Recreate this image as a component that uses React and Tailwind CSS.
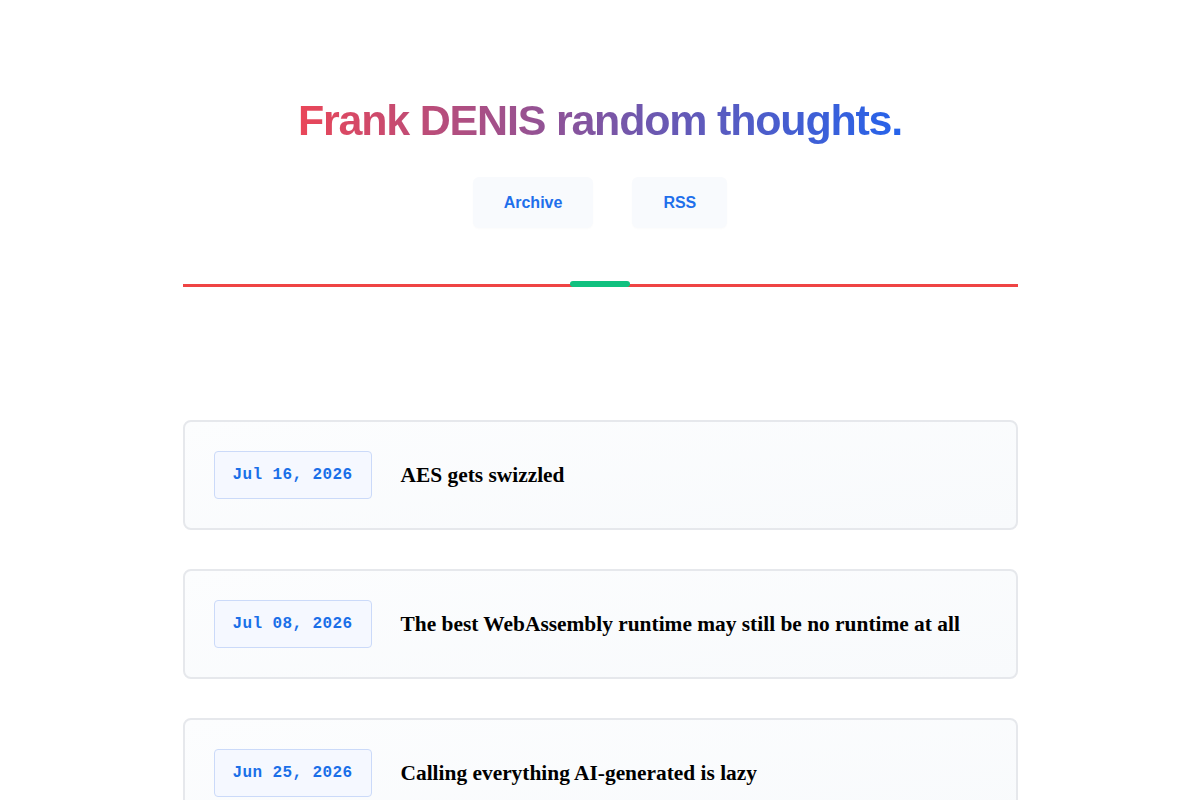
import React from "react";

const posts = [
  { date: "Jul 16, 2026", title: "AES gets swizzled" },
  { date: "Jul 08, 2026", title: "The best WebAssembly runtime may still be no runtime at all" },
  { date: "Jun 25, 2026", title: "Calling everything AI-generated is lazy" },
  { date: "Jun 12, 2026", title: "Notes on constant-time code" },
];

const links = ["Archive", "RSS"];

export default function App() {
  return (
    <div className="min-h-screen bg-white font-['Liberation_Sans',Arial,sans-serif]">
      <div className="mx-auto w-[835px]">
        {/* Header */}
        <header className="pt-[95px] text-center">
          <h1 className="inline-block bg-linear-to-r/srgb from-[#ea4658] via-[#7357ab] via-55% to-[#2563eb] bg-clip-text text-[43px] font-bold leading-[1.2] tracking-[-0.028em] text-transparent">
            Frank DENIS random thoughts.
          </h1>
          <nav className="mt-[30px] flex justify-center gap-[39px]">
            {links.map((l) => (
              <a
                key={l}
                href="#"
                className="rounded-md bg-[#f8fafd] px-[31px] py-[13px] text-base font-bold leading-[25px] text-[#1f6feb] shadow-[0_1px_2px_rgba(0,0,0,0.02)]"
              >
                {l}
              </a>
            ))}
          </nav>
        </header>

        {/* Divider */}
        <div className="relative mt-[56px] h-[3px] bg-[#ef4444]">
          <div className="absolute left-1/2 top-[-3px] h-[6px] w-[60px] -translate-x-1/2 rounded-full bg-[#10c17f]" />
        </div>

        {/* Posts */}
        <main className="mt-[133px] flex flex-col gap-[39px] pb-10">
          {posts.map((p) => (
            <article
              key={p.date}
              className="flex items-center gap-[29px] rounded-lg border-2 border-[#e6e8ec] bg-linear-to-br from-[#fcfdfe] to-[#f8fafc] p-[29px]"
            >
              <span className="shrink-0 rounded border border-[#cbdaf9] bg-[#f5f8ff] px-[18px] py-[11px] font-['Liberation_Mono',monospace] text-base font-bold leading-6 tracking-[0.025em] text-[#1a6fe8]">
                {p.date}
              </span>
              <h2 className="font-['Liberation_Serif',serif] text-[21.4px] font-bold text-black">
                {p.title}
              </h2>
            </article>
          ))}
        </main>
      </div>
    </div>
  );
}
